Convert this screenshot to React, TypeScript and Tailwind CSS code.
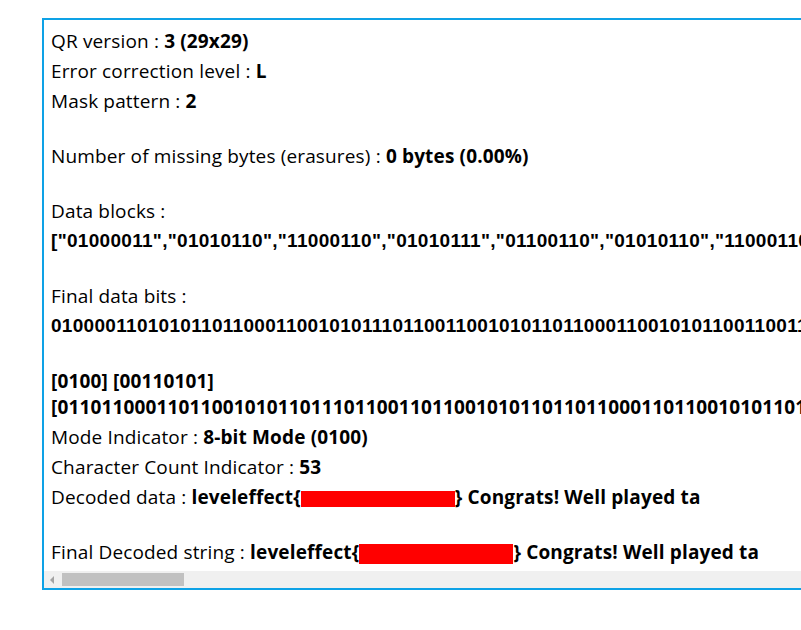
import React from 'react';

const dataBlocks =
  '["01000011","01010110","11000110","01010111","01100110","01010110","11000110","01010110","01100110","01010111"]';
const finalBits =
  '0100001101010110110001100101011101100110010101101100011001010110011001100101011101100110';
const payloadBits =
  '[0110110001101100101011011101100110110010101101101100011011001010110110110010101101100]';

const Row = ({ label, value, children }: { label: string; value?: string; children?: React.ReactNode }) => (
  <div className="leading-[26px] mb-[4px] whitespace-nowrap">
    {label} : <span className="font-bold">{value}</span>
    {children}
  </div>
);

const Gap = () => <div className="h-[25px]" />;

const Redacted = ({ w, h }: { w: string; h: string }) => (
  <span className={`inline-block align-middle bg-[#ff0000] ${w} ${h}`} />
);

export default function App() {
  return (
    <div className="w-full h-[630px] overflow-hidden bg-white">
      <div className="ml-[42px] mt-[18px] w-[820px] h-[572px] border-2 border-[#0ea2e6] flex flex-col">
        <div
          className="flex-1 overflow-hidden pl-[7px] pt-[8px] text-[19px] tracking-[0.15px] text-black"
          style={{ fontFamily: '"Open Sans", "Noto Sans", sans-serif' }}
        >
          <Row label="QR version" value="3 (29x29)" />
          <Row label="Error correction level" value="L" />
          <Row label="Mask pattern" value="2" />
          <Gap />
          <Row label="Number of missing bytes (erasures)" value="0 bytes (0.00%)" />
          <Gap />
          <Row label="Data blocks" />
          <div
            className="leading-[26px] mb-[4px] whitespace-nowrap font-bold tracking-[0.3px]"
            style={{ fontFamily: '"Liberation Sans", Arial, sans-serif' }}
          >
            {dataBlocks}
          </div>
          <Gap />
          <Row label="Final data bits" />
          <div
            className="leading-[26px] mb-[4px] whitespace-nowrap font-bold tracking-[0.3px]"
            style={{ fontFamily: '"Liberation Sans", Arial, sans-serif' }}
          >
            {finalBits}
          </div>
          <Gap />
          <div className="leading-[26px] mb-[4px] font-bold">
            <div>[0100] [00110101]</div>
            <div className="whitespace-nowrap">{payloadBits}</div>
          </div>
          <Row label="Mode Indicator" value="8-bit Mode (0100)" />
          <Row label="Character Count Indicator" value="53" />
          <div className="leading-[26px] mb-[4px] whitespace-nowrap">
            Decoded data :{' '}
            <span className="font-bold">
              leveleffect{'{'}
              <Redacted w="w-[154px]" h="h-[16px]" />
              {'}'} Congrats! Well played ta
            </span>
          </div>
          <Gap />
          <div className="leading-[26px] mb-[4px] whitespace-nowrap">
            Final Decoded string :{' '}
            <span className="font-bold">
              leveleffect{'{'}
              <Redacted w="w-[154px]" h="h-[20px]" />
              {'}'} Congrats! Well played ta
            </span>
          </div>
        </div>
        <div className="h-[17px] bg-[#f0f0f0] flex items-center">
          <div className="w-[17px] h-[17px] flex items-center justify-center">
            <svg width="5" height="8" viewBox="0 0 5 8">
              <path d="M4 0 L0 4 L4 8 Z" fill="#a3a3a3" />
            </svg>
          </div>
          <div className="w-[122px] h-[13px] bg-[#c1c1c1] ml-[1px]" />
        </div>
      </div>
    </div>
  );
}
